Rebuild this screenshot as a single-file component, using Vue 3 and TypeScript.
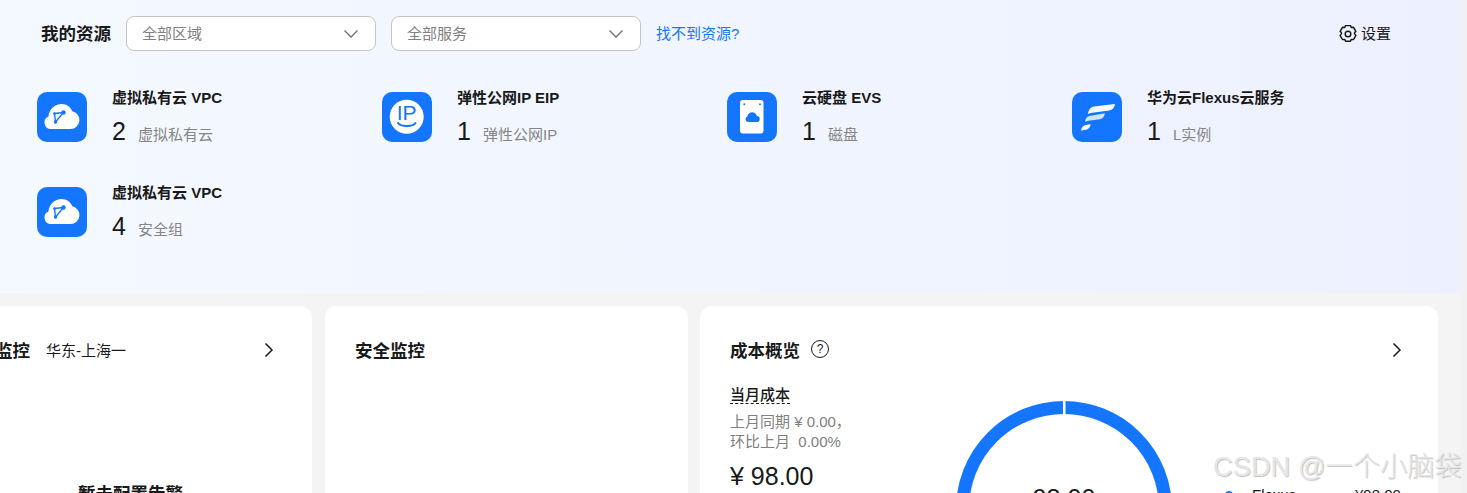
<template>
  <div class="page">
    <div class="main">
      <section class="resources">
        <div class="res-head">
          <h2 class="res-title">我的资源</h2>
          <div v-for="name in selects" :key="name" class="select">
            <span>{{ name }}</span>
            <svg width="16" height="16" viewBox="0 0 16 16" fill="none">
              <path d="M1.5 4.500 8 11l6.500-6.500" stroke="#6f6f6f" stroke-width="1.300" />
            </svg>
          </div>
          <a class="link">找不到资源?</a>
          <div class="settings">
            <svg width="18" height="18" viewBox="1 1 16 16" fill="none" stroke="#191919" stroke-width="1.300" stroke-linejoin="round">
              <path d="M6.800 1.500h4.400l.7 1.700 1.900-.2 2.200 3.600-1.200 1.500v.8l1.200 1.500-2.200 3.600-1.900-.2-.7 1.700H6.800l-.7-1.700-1.900.2-2.200-3.600 1.200-1.500v-.8L2 6.600 4.200 3l1.900.2z" />
              <circle cx="9" cy="9" r="2.500" />
            </svg>
            <span>设置</span>
          </div>
        </div>

        <div class="res-grid">
          <div v-for="item in items" :key="item.title + item.sub" class="res-item">
            <div class="res-icon">
              <svg width="50" height="50" viewBox="0 0 50 50" fill="none">
                <template v-if="item.icon === 'vpc'">
                  <path d="M14 37a6.500 6.500 0 0 1-2.500-12.500C12 17 18 12 24.500 12c5 0 9 2.800 10.800 7.200A9 9 0 0 1 33.500 37z" fill="#fff" />
                  <path d="M17.500 21.500 26.500 20.500 18.500 30z" stroke="#1476ff" stroke-width="1.400" />
                  <circle cx="26.500" cy="20.500" r="2.200" fill="#1476ff" />
                  <circle cx="17.500" cy="21.500" r="1.300" fill="#1476ff" />
                  <circle cx="18.500" cy="30" r="1.700" fill="#1476ff" />
                </template>
                <template v-else-if="item.icon === 'eip'">
                  <circle cx="24.700" cy="24.700" r="17" fill="#fff" />
                  <text x="24.700" y="28" text-anchor="middle" class="ip-text">IP</text>
                  <path d="M16 31c2.500 4 15 4 17.500 0" stroke="#1476ff" stroke-width="2" stroke-linecap="round" />
                </template>
                <template v-else-if="item.icon === 'evs'">
                  <rect x="13" y="8" width="23.500" height="33.500" rx="3" fill="#fff" />
                  <circle cx="17.300" cy="12.300" r="1" fill="#1476ff" />
                  <circle cx="33" cy="12.300" r="1" fill="#1476ff" />
                  <path d="M21 30a2.800 2.800 0 0 1-.7-5.400c.5-2.600 2.500-4.300 4.900-4.300 2.200 0 4 1.400 4.700 3.700A3 3 0 0 1 29.500 30z" fill="#1476ff" />
                </template>
                <template v-else>
                  <path d="M16 22c.5-4 2.500-7 6-7.500L43 12c-.6 3.500-2.500 6-6 6.600L22 20.500c-2.500.3-4.500.7-6 1.500z" fill="#fff" />
                  <path d="M13 30c.5-3.500 1.500-5.500 4.500-6L33 21.300c-.7 3.300-2 5.400-5 6L18 28.500c-2 .3-3.500.7-5 1.500z" fill="#fff" opacity="0.8" />
                  <path d="M9 38.700c.6-3.200 2-5.300 4.500-5.800l5.200-.7c-.6 2.800-1.800 4.600-3.900 5.200-2 .4-4 .8-5.800 1.300z" fill="#fff" />
                </template>
              </svg>
            </div>
            <div class="res-text">
              <div class="res-name">{{ item.title }}</div>
              <div class="res-count">
                <span class="num">{{ item.count }}</span>
                <span class="sub">{{ item.sub }}</span>
              </div>
            </div>
          </div>
        </div>
      </section>

      <div class="cards">
        <section class="card monitor">
          <div class="card-head">
            <h3>资源监控</h3>
            <span class="region">华东-上海一</span>
            <svg class="chevron" width="16" height="16" viewBox="0 0 16 16" fill="none">
              <path d="M4.500 1.500 11 8l-6.500 6.500" stroke="#191919" stroke-width="1.500" />
            </svg>
          </div>
          <div class="alarm">暂未配置告警</div>
        </section>

        <section class="card security">
          <div class="card-head">
            <h3>安全监控</h3>
          </div>
        </section>

        <section class="card cost">
          <div class="card-head">
            <h3>成本概览</h3>
            <span class="help">?</span>
            <svg class="chevron" width="16" height="16" viewBox="0 0 16 16" fill="none">
              <path d="M4.500 1.500 11 8l-6.500 6.500" stroke="#191919" stroke-width="1.500" />
            </svg>
          </div>
          <div class="cost-body">
            <div class="cost-left">
              <div class="cost-label"><span>当月成本</span></div>
              <div class="cost-note">上月同期 ¥ 0.00，</div>
              <div class="cost-note">环比上月&nbsp; 0.00%</div>
              <div class="cost-total">¥ 98.00</div>
            </div>
            <div class="donut">
              <svg width="216" height="216" viewBox="0 0 216 216" fill="none">
                <circle cx="108" cy="108" r="101.500" stroke="#1476ff" stroke-width="13" />
                <rect x="107" y="0" width="2.500" height="14" fill="#fff" />
                <text x="108" y="106" text-anchor="middle" class="donut-num">98.00</text>
              </svg>
            </div>
            <div class="legend">
              <i class="dot"></i>
              <span class="legend-name">Flexus</span>
              <span class="legend-val">¥98.00</span>
            </div>
          </div>
        </section>
      </div>
    </div>
    <div class="scrollbar"></div>
    <div class="watermark">CSDN @一个小脑袋</div>
  </div>
</template>

<script setup lang="ts">
interface ResourceItem {
  icon: 'vpc' | 'eip' | 'evs' | 'flexus'
  title: string
  count: number
  sub: string
}

const selects = ['全部区域', '全部服务']

const items: ResourceItem[] = [
  { icon: 'vpc', title: '虚拟私有云 VPC', count: 2, sub: '虚拟私有云' },
  { icon: 'eip', title: '弹性公网IP EIP', count: 1, sub: '弹性公网IP' },
  { icon: 'evs', title: '云硬盘 EVS', count: 1, sub: '磁盘' },
  { icon: 'flexus', title: '华为云Flexus云服务', count: 1, sub: 'L实例' },
  { icon: 'vpc', title: '虚拟私有云 VPC', count: 4, sub: '安全组' },
]
</script>

<style>
html,
body {
  margin: 0;
  overflow: hidden;
}
</style>

<style scoped>
.page {
  position: relative;
  display: flex;
  width: 1467px;
  height: 493px;
  overflow: hidden;
  background: #f4f4f4;
  color: #191919;
  font-family: "Liberation Sans", "Noto Sans CJK SC", sans-serif;
}

.main {
  width: 1461px;
  flex: none;
}

.scrollbar {
  width: 6px;
  flex: none;
  background: #f1f1f1;
}

.resources {
  height: 293px;
  box-sizing: border-box;
  padding-top: 16px;
  background: linear-gradient(90deg, #f4f8ff 0%, #f1f5ff 50%, #edf0fe 100%);
}

.res-head {
  display: flex;
  align-items: center;
  height: 35px;
  padding: 0 70px 0 41px;
}

.res-title {
  margin: 0 15px 2px 0;
  width: 70px;
  font-size: 17.500px;
  font-weight: 700;
  white-space: nowrap;
}

.select {
  display: flex;
  align-items: center;
  justify-content: space-between;
  box-sizing: border-box;
  width: 250px;
  height: 35px;
  margin-right: 15px;
  padding: 0 16px 0 15px;
  background: #fff;
  border: 1px solid #c4c4c8;
  border-radius: 8px;
  color: #808080;
  font-size: 15px;
}

.select span {
  margin-bottom: 2px;
}

.link {
  margin-bottom: 2px;
  color: #1476ff;
  font-size: 15px;
}

.settings {
  display: flex;
  align-items: center;
  gap: 4px;
  margin-left: auto;
  font-size: 15px;
}

.settings span {
  margin-bottom: 2px;
}

.res-grid {
  display: grid;
  grid-template-columns: repeat(4, 345px);
  row-gap: 45px;
  margin-top: 41px;
  padding-left: 37px;
}

.res-item {
  display: flex;
  gap: 25px;
  height: 50px;
}

.res-icon {
  width: 50px;
  height: 50px;
  flex: none;
  background: #1476ff;
  border-radius: 10px;
}

.res-icon svg {
  display: block;
}

.ip-text {
  fill: #1476ff;
  font-size: 21px;
}

.res-text {
  margin-top: -3px;
}

.res-name {
  height: 18px;
  line-height: 18px;
  font-size: 15px;
  font-weight: 700;
  white-space: nowrap;
}

.res-count {
  display: flex;
  align-items: baseline;
  margin-top: 9px;
}

.num {
  width: 26px;
  font-size: 25px;
  line-height: 30px;
}

.sub {
  color: #858585;
  font-size: 15px;
}

.cards {
  display: flex;
  gap: 13px;
  margin: 13px 0 0 -70px;
}

.card {
  flex: none;
  box-sizing: border-box;
  height: 300px;
  padding: 31px 30px 0;
  background: #fff;
  border-radius: 12px;
}

.monitor {
  width: 382px;
}

.monitor .chevron {
  margin-right: 5px;
}

.security {
  width: 363px;
}

.cost {
  width: 738px;
  margin-left: -1px;
}

.card-head {
  display: flex;
  align-items: center;
  height: 24px;
}

.card-head h3 {
  margin: 0;
  font-size: 17.500px;
  font-weight: 700;
  white-space: nowrap;
}

.region {
  margin-left: 16px;
  font-size: 15px;
}

.chevron {
  margin-top: 2px;
  margin-left: auto;
  margin-right: 3px;
}

.alarm {
  margin: 121px 0 0 118px;
  font-size: 17.500px;
  font-weight: 700;
  line-height: 24px;
  white-space: nowrap;
}

.help {
  display: flex;
  align-items: center;
  justify-content: center;
  box-sizing: border-box;
  width: 18px;
  height: 18px;
  margin-left: 11px;
  border: 1.300px solid #191919;
  border-radius: 50%;
  font-size: 12px;
}

.cost-body {
  display: flex;
  margin-top: 24px;
}

.cost-left {
  width: 226px;
  flex: none;
}

.cost-label {
  font-size: 15px;
  font-weight: 500;
  line-height: 20px;
}

.cost-label span {
  display: inline-block;
  line-height: 17px;
  border-bottom: 1px dashed #191919;
}

.cost-note {
  color: #808080;
  font-size: 15px;
  line-height: 20px;
}

.cost-label + .cost-note {
  margin-top: 7px;
}

.cost-total {
  margin-top: 9px;
  font-size: 25px;
  line-height: 30px;
  white-space: nowrap;
}

.donut {
  width: 216px;
  flex: none;
  margin-top: 16px;
}

.donut svg {
  display: block;
}

.donut-num {
  fill: #191919;
  font-size: 25px;
}

.legend {
  display: flex;
  align-items: center;
  height: 20px;
  margin: 99px 0 0 52px;
  font-size: 15px;
}

.dot {
  width: 8px;
  height: 8px;
  margin: 1px 19px 0 1px;
  background: #1476ff;
  border-radius: 50%;
}

.legend-name {
  width: 103px;
}

.watermark {
  position: absolute;
  left: 1213px;
  top: 450px;
  color: #e6e6e6;
  font-size: 27px;
  font-weight: 300;
  letter-spacing: 0.2px;
  line-height: 34px;
  white-space: nowrap;
  text-shadow: 1px 1px 1px rgba(120, 120, 120, 0.45);
}
</style>
